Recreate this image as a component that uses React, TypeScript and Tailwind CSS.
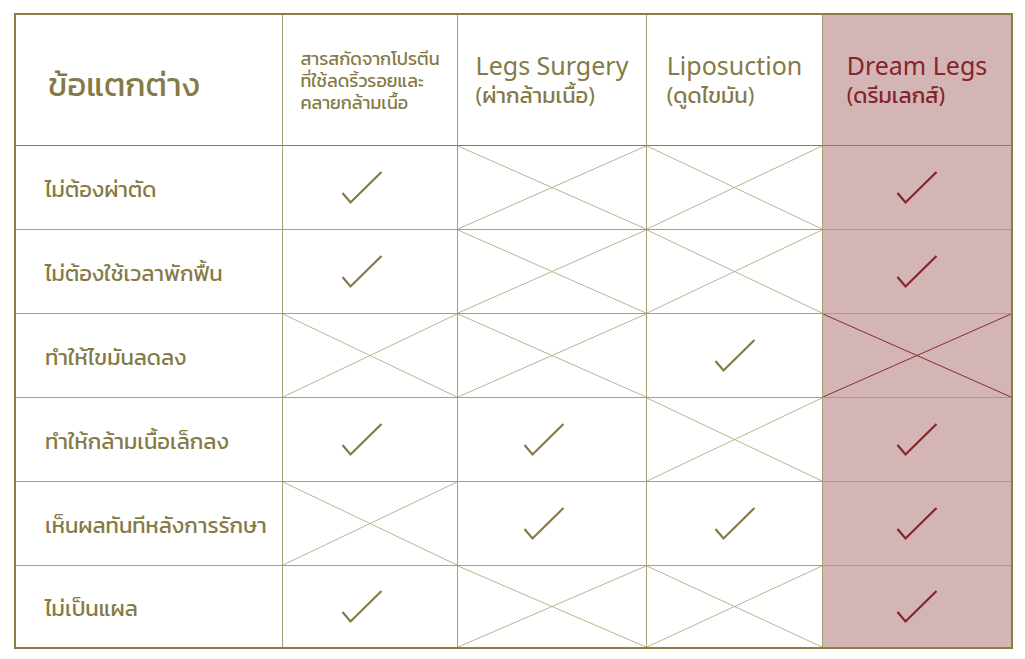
import React from 'react';

type Mark = 'check' | 'cross';

const rows: { label: string; marks: Mark[] }[] = [
  { label: 'ไม่ต้องผ่าตัด', marks: ['check', 'cross', 'cross', 'check'] },
  { label: 'ไม่ต้องใช้เวลาพักฟื้น', marks: ['check', 'cross', 'cross', 'check'] },
  { label: 'ทำให้ไขมันลดลง', marks: ['cross', 'cross', 'check', 'cross'] },
  { label: 'ทำให้กล้ามเนื้อเล็กลง', marks: ['check', 'check', 'cross', 'check'] },
  { label: 'เห็นผลทันทีหลังการรักษา', marks: ['cross', 'check', 'check', 'check'] },
  { label: 'ไม่เป็นแผล', marks: ['check', 'cross', 'cross', 'check'] },
];

const font = {
  fontFamily:
    '"Noto Sans", "Kanit", "Prompt", "Noto Sans Thai UI", "Noto Sans Thai", "Loma", sans-serif',
};

function Check({ color }: { color: string }) {
  return (
    <svg width="42" height="34" viewBox="0 0 42 34" fill="none">
      <path d="M1.5 22 L9.5 31.5 L40.5 1" stroke={color} strokeWidth="2.2" strokeLinejoin="miter" />
    </svg>
  );
}

function Cross({ color }: { color: string }) {
  return (
    <svg className="absolute inset-0 h-full w-full" preserveAspectRatio="none" viewBox="0 0 100 100">
      <line x1="0" y1="0" x2="100" y2="100" stroke={color} strokeWidth="1" vectorEffect="non-scaling-stroke" />
      <line x1="100" y1="0" x2="0" y2="100" stroke={color} strokeWidth="1" vectorEffect="non-scaling-stroke" />
    </svg>
  );
}

export default function App() {
  return (
    <div className="min-h-screen bg-white pt-[13px] pl-[14px]" style={font}>
      <div className="grid w-[999px] grid-cols-[267px_175px_189px_176px_188px] grid-rows-[131px_repeat(5,84px)_81px] border-2 border-[#8a7d45] text-[#857a45]">
        {/* header */}
        <div className="flex items-center border-r border-b border-r-[#a89f72] border-b-[#8a7d45] pt-[6px] pl-[32px]">
          <span className="text-[33px] leading-none">ข้อแตกต่าง</span>
        </div>
        <div className="flex items-center justify-center border-r border-b border-r-[#a89f72] border-b-[#8a7d45]">
          <div className="text-left text-[18px] leading-[22px]">
            สารสกัดจากโปรตีน
            <br />
            ที่ใช้ลดริ้วรอยและ
            <br />
            คลายกล้ามเนื้อ
          </div>
        </div>
        <div className="flex items-center justify-center border-r border-b border-r-[#a89f72] border-b-[#8a7d45]">
          <div className="text-left">
            <div className="text-[25px] leading-[28px]">Legs Surgery</div>
            <div className="text-[22px] leading-[30px]">(ผ่ากล้ามเนื้อ)</div>
          </div>
        </div>
        <div className="flex items-center justify-center border-r border-b border-r-[#a89f72] border-b-[#8a7d45]">
          <div className="text-left">
            <div className="text-[25px] leading-[28px]">Liposuction</div>
            <div className="text-[22px] leading-[30px]">(ดูดไขมัน)</div>
          </div>
        </div>
        <div className="flex items-center justify-center border-b border-b-[#8a7d45] bg-[#d3b5b6] text-[#87232a]">
          <div className="text-left">
            <div className="text-[25px] leading-[28px]">Dream Legs</div>
            <div className="text-[22px] leading-[30px]">(ดรีมเลกส์)</div>
          </div>
        </div>

        {rows.map((row, ri) => {
          const last = ri === rows.length - 1;
          const bottom = last ? '' : 'border-b border-b-[#a89f72]';
          return (
            <React.Fragment key={row.label}>
              <div className={`flex items-center border-r border-r-[#a89f72] pl-[29px] ${bottom}`}>
                <span className="text-[22px] leading-none">{row.label}</span>
              </div>
              {row.marks.map((m, ci) => {
                const pink = ci === 3;
                const shift = ci === 0 || ci === 1 ? 'pr-[17px]' : '';
                return (
                  <div
                    key={ci}
                    className={`relative flex items-center justify-center ${shift} ${
                      pink ? 'bg-[#d3b5b6]' : 'border-r border-r-[#a89f72]'
                    } ${bottom}`}
                  >
                    {m === 'check' ? (
                      <Check color={pink ? '#87232a' : '#857a45'} />
                    ) : (
                      <Cross color={pink ? '#8b2a2e' : '#bbb38f'} />
                    )}
                  </div>
                );
              })}
            </React.Fragment>
          );
        })}
      </div>
    </div>
  );
}
